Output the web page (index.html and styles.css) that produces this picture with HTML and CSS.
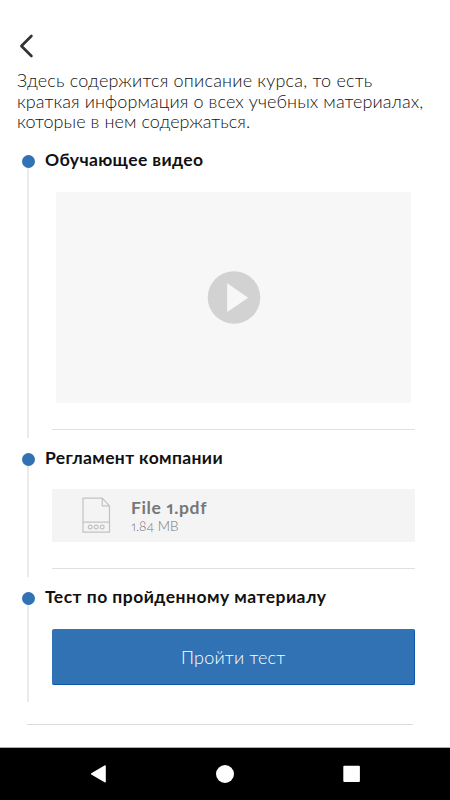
FILE: index.html
```html
<!DOCTYPE html>
<html lang="ru">
<head>
<meta charset="utf-8">
<title>Курс</title>
<link rel="stylesheet" href="styles.css">
</head>
<body>
<main class="screen">
  <header class="topbar">
    <svg class="back" width="16" height="24" viewBox="0 0 16 24"><path d="M13.4 2 3.4 12l10 10"/></svg>
  </header>
  <p class="intro">
    <span class="line line-a">Здесь содержится описание курса, то есть</span>
    <span class="line line-b">краткая информация о всех учебных материалах,</span>
    <span class="line line-c">которые в нем содержаться.</span>
  </p>
  <section class="step step-video">
    <div class="rail"><i class="dot"></i></div>
    <div class="content">
      <h2 class="title"><span class="title-a">Обучающее видео</span></h2>
      <div class="video">
        <svg width="54" height="54" viewBox="0 0 54 54"><circle cx="27" cy="26.5" r="26.3" fill="#d2d2d2"/><path d="M20.2 12.3 41.2 26.7 20.2 41z" fill="#f7f7f7"/></svg>
      </div>
      <div class="divider"></div>
    </div>
  </section>
  <section class="step step-file">
    <div class="rail"><i class="dot"></i></div>
    <div class="content">
      <h2 class="title"><span class="title-b">Регламент компании</span></h2>
      <div class="file">
        <svg class="file-icon" width="29" height="37" viewBox="0 0 29 37"><path d="M1 1.2h19.2l7.3 7.6v26.4H1zM20.2 1.2v7.6h7.3M1 25.2h26.5"/><circle cx="8.2" cy="30" r="1.9"/><circle cx="14.2" cy="30" r="1.9"/><circle cx="20.2" cy="30" r="1.9"/></svg>
        <div class="file-text">
          <div class="file-name">File 1.pdf</div>
          <div class="file-size">1.84 MB</div>
        </div>
      </div>
      <div class="divider"></div>
    </div>
  </section>
  <section class="step step-test">
    <div class="rail"><i class="dot"></i></div>
    <div class="content">
      <h2 class="title"><span class="title-c">Тест по пройденному материалу</span></h2>
      <button class="start">Пройти тест</button>
    </div>
  </section>
  <div class="end-line"></div>
  <nav class="navbar">
    <svg width="450" height="52" viewBox="0 0 450 52" fill="#fff"><path d="M91.3 25.3 104.5 17.6q1.3-.7 1.3.6v15.4q0 1.3-1.3.6L91.3 26.6q-1-.6 0-1.3z"/><circle cx="225" cy="26" r="9"/><rect x="343.3" y="17.7" width="16.6" height="16.4" rx="1"/></svg>
  </nav>
</main>
</body>
</html>
```

FILE: styles.css
```css
* { box-sizing: border-box; }
body { margin: 0; background: #fff; font-family: Lato, "Open Sans", sans-serif; color: #111; }
.screen { width: 450px; height: 800px; display: flex; flex-direction: column; overflow: hidden; background: #fff; }
.topbar { height: 70px; padding: 34px 0 0 18px; flex: none; }
.back { display: block; fill: none; stroke: #333; stroke-width: 2.7; stroke-linecap: round; stroke-linejoin: round; }
.intro { margin: 0 0 0 17px; height: 80px; font-size: 18px; font-weight: 300; line-height: 20.5px; flex: none; }
.line { display: block; white-space: nowrap; width: max-content; }
.line-a { letter-spacing: 0.2px; }
.line-b { letter-spacing: 0.1px; }
.line-c { letter-spacing: 0.06px; }
.step { display: flex; flex: none; margin-bottom: 10px; }
.step-video { height: 288px; }
.step-file { height: 129px; }
.step-test { height: 115px; margin-bottom: 22px; }
.rail { width: 2px; margin: 5px 16px 0 27px; background: #ebebeb; flex: none; }
.dot { display: block; width: 13px; height: 13px; margin-left: -5px; border-radius: 50%; background: #3172b4; }
.content { width: 370px; display: flex; flex-direction: column; padding-left: 7.4px; }
.title { margin: 0 0 0 -7.4px; height: 42px; font-size: 17.5px; line-height: 20px; font-weight: 700; white-space: nowrap; flex: none; }
.title-a { letter-spacing: 0.36px; }
.title-b { letter-spacing: 0.36px; }
.title-c { letter-spacing: 0.46px; }
.step-file .title { height: 41px; margin-top: -0.5px; }
.video { height: 211px; margin: 0 4px; background: #f7f7f7; display: flex; align-items: center; justify-content: center; flex: none; }
.divider { height: 1px; margin-top: 26px; background: #e0e0e0; flex: none; }
.file { height: 53px; background: #f4f4f4; display: flex; align-items: center; padding-left: 29.6px; flex: none; }
.file-icon { fill: none; stroke: #c2c2c2; stroke-width: 1.2; stroke-linejoin: round; margin-top: 1px; }
.file-text { margin: 2px 0 0 20px; color: #777; font-variant-numeric: oldstyle-nums proportional-nums; }
.file-name { font-size: 17.5px; line-height: 21px; font-weight: 700; letter-spacing: 0.65px; }
.file-size { font-size: 13.5px; line-height: 17px; font-weight: 300; letter-spacing: -0.05px; }
.start { height: 56px; width: 100%; border: 0; border-right: 1px solid #0c58a8; border-bottom: 1px solid #0c58a8; border-radius: 2px; background: #3172b4; color: #fff; font: 300 18px/56px Lato, sans-serif; letter-spacing: 0.2px; padding: 0; flex: none; }
.end-line { width: 386px; height: 1px; margin: 0 0 22px 27px; background: #dcdcdc; flex: none; }
.navbar { height: 53px; border-top: 1px solid #a8b0ae; background: #000; flex: none; }
.navbar svg { display: block; }
```
